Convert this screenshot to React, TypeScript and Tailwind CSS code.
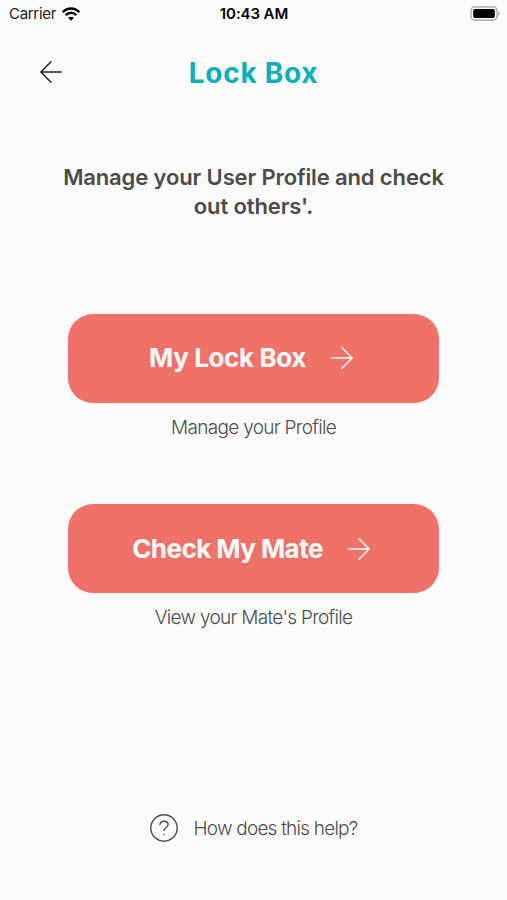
import React from "react";

function Arrow({ className }: { className?: string }) {
  return (
    <svg viewBox="0 0 22 22" width="22" height="22" fill="none" stroke="currentColor" strokeWidth="1.5" strokeLinecap="round" strokeLinejoin="round" className={className}>
      <path d="M.8 11H21M11 .8 21.2 11 11 21.2" />
    </svg>
  );
}

function StatusBar() {
  return (
    <header className="grid h-7 grid-cols-3 items-center pl-[8px] pr-[7px] text-black">
      <div className="flex items-center gap-[6px]">
        <span className="pl-px text-[15px] leading-7 tracking-[-0.3px] text-[#222]">Carrier</span>
        <svg width="18" height="14" viewBox="0 0 18 14" fill="none" stroke="#000" strokeWidth="2.5" className="-mt-px">
          <path d="M.8 5.2C5.5.3 12.5.3 17.2 5.2M3.7 8.1c3-3 7.6-3 10.6 0" />
          <path d="M9 13.7 6.1 10.8c1.6-1.5 4.2-1.5 5.8 0Z" fill="#000" stroke="none" />
        </svg>
      </div>
      <span className="text-center text-[15px] font-semibold leading-7 tracking-[-0.1px]">10:43 AM</span>
      <svg width="30" height="15" viewBox="0 0 30 15" className="-mt-px justify-self-end">
        <rect x="1" y=".9" width="26" height="13.2" rx="4" fill="#fff" stroke="#b5b5b5" strokeWidth="1.6" />
        <rect x="3.2" y="3" width="21.6" height="9" rx="1.8" fill="#000" />
        <path d="M28 5.2c2.3.8 2.3 3.8 0 4.6Z" fill="#b5b5b5" />
      </svg>
    </header>
  );
}

function Action({ label, caption, labelClass, captionClass }: { label: string; caption: string; labelClass: string; captionClass: string }) {
  return (
    <section className="flex h-[190.5px] flex-col items-center">
      <button className="flex h-[89px] w-[371px] items-center justify-center gap-[25px] rounded-[25px] bg-[#f07167] pr-[5px] text-white">
        <span className={`whitespace-nowrap text-[26px] font-bold leading-8 ${labelClass}`}>{label}</span>
        <Arrow />
      </button>
      <p className={`mt-3 whitespace-nowrap text-[19px] font-light leading-[26px] text-[#4b4b4b] ${captionClass}`}>{caption}</p>
    </section>
  );
}

export default function App() {
  return (
    <main className="flex h-[900px] w-[507px] flex-col overflow-hidden bg-[#fbfbfb] font-['Inter','Liberation_Sans',sans-serif]">
      <StatusBar />
      <nav className="grid h-[88px] grid-cols-[1fr_auto_1fr] items-center px-10">
        <button aria-label="Back"><Arrow className="rotate-180 text-[#222]" /></button>
        <h1 className="mt-0.5 text-[28px] font-bold leading-9 tracking-[0.7px] text-[#0cafb8]">Lock Box</h1>
      </nav>
      <h2 className="mt-[46.5px] text-center text-[22px] font-semibold leading-[29.5px] tracking-[-0.13px] text-[#4b4b4b]">
        Manage your User Profile and check<br />out others'.
      </h2>
      <div className="mt-[92px] flex flex-col">
        <Action label="My Lock Box" caption="Manage your Profile" labelClass="tracking-[-0.4px]" captionClass="tracking-[-0.68px]" />
        <Action label="Check My Mate" caption="View your Mate's Profile" labelClass="tracking-[-0.55px]" captionClass="tracking-[-0.7px]" />
      </div>
      <button className="mt-[119px] flex items-center justify-center gap-4 text-[#4b4b4b]">
        <svg width="28" height="28" viewBox="0 0 28 28" fill="none" stroke="currentColor" strokeWidth="1.4" strokeLinecap="round">
          <circle cx="14" cy="14" r="13.2" />
          <path d="M10 10.5c.3-2.1 2-3.3 4.1-3.3 2.3 0 4 1.4 4 3.4 0 3-4.1 2.9-4.1 6M14 20.4v.1" />
        </svg>
        <span className="mt-0.5 whitespace-nowrap text-[19px] font-light leading-[26px] tracking-[-0.78px]">How does this help?</span>
      </button>
    </main>
  );
}
